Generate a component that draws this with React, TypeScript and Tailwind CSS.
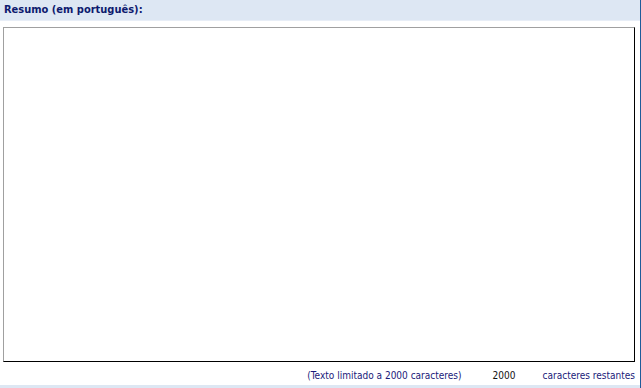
export default function App() {
  return (
    <div className="w-[641px] h-[388px] flex bg-white font-['DejaVu_Sans_Condensed','Liberation_Sans',sans-serif] text-[10px] text-[#1a1a7a]">
      <div className="flex-1 flex flex-col">
        <div className="h-[21px] bg-[#dde7f3] border-b border-[#e8eef7] flex items-center px-[4px]">
          <span className="font-bold text-[11px] text-[#0d1a6e]">Resumo (em português):</span>
        </div>
        <div className="pt-[6px] pl-[3px] pr-[5px]">
          <textarea
            className="block w-[632px] h-[335px] resize-none border border-t-[#a0a0a0] border-l-[#a0a0a0] border-r-black border-b-black outline-none"
            defaultValue=""
          />
        </div>
        <div className="flex items-start justify-end h-[23px] pt-[6px] pr-[5px]">
          <span>(Texto limitado a 2000 caracteres)</span>
          <span className="ml-[31px] w-[50px] text-[#111]">2000</span>
          <span>caracteres restantes</span>
        </div>
        <div className="flex-1 bg-[#dde7f3]" />
      </div>
      <div className="w-[2px] bg-[#1f5c9a]" />
    </div>
  );
}
